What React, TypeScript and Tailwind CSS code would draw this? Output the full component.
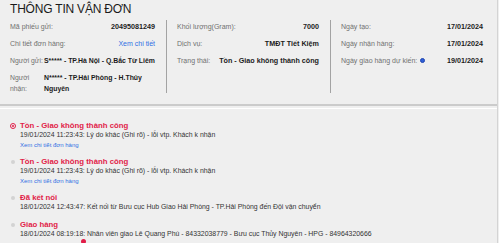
const font = "font-['Liberation_Sans','Helvetica',Arial,sans-serif]";

function Row({ label, value, kind = "bold" }: { label: string; value: string; kind?: "bold" | "link" }) {
    return (
        <div className="flex items-start justify-between leading-[11px]">
            <span className="text-[7px] text-[#6f6f6f]">{label}</span>
            <span className={kind === "link" ? "text-[7px] text-[#2f6fe4]" : "text-[7.2px] font-bold text-[#1c1c1c]"}>
                {value}
            </span>
        </div>
    );
}

function Party({ label, value, nowrap }: { label: string; value: string; nowrap?: boolean }) {
    return (
        <div className={`flex items-start gap-[2px] leading-[11px] ${nowrap ? "whitespace-nowrap" : ""}`}>
            <span className="w-[32px] shrink-0 text-[6.8px] text-[#6f6f6f]">{label}</span>
            <span className="text-[6.9px] font-bold text-[#1c1c1c]">{value}</span>
        </div>
    );
}

type Step = { title: string; detail: string; link?: boolean; active?: boolean };

const steps: Step[] = [
    {
        title: "Tồn - Giao không thành công",
        detail: "19/01/2024 11:23:43: Lý do khác (Ghi rõ) - lỗi vtp. Khách k nhận",
        link: true,
        active: true,
    },
    {
        title: "Tồn - Giao không thành công",
        detail: "19/01/2024 11:23:43: Lý do khác (Ghi rõ) - lỗi vtp. Khách k nhận",
        link: true,
    },
    {
        title: "Đã kết nối",
        detail: "18/01/2024 12:43:47: Kết nối từ Bưu cục Hub Giao Hải Phòng - TP.Hải Phòng đến Đội vận chuyển",
    },
    {
        title: "Giao hàng",
        detail: "18/01/2024 08:19:18: Nhân viên giao Lê Quang Phú - 84332038779 - Bưu cục Thủy Nguyên - HPG - 84964320666",
    },
];

export default function App() {
    return (
        <div className={`w-[499px] h-[243px] overflow-hidden bg-[#efefef] ${font}`}>
            <div className="w-[498px] h-full border-r border-[#d4d4d4]">
                {/* Title */}
                <div className="h-[20px] pl-[10px] pt-[2px] text-[12px] leading-[14px] font-medium tracking-[-0.2px] text-[#1a1a1a]">
                    THÔNG TIN VẬN ĐƠN
                </div>

                {/* Info card */}
                <div className="flex pb-[11px] border-b-2 border-[#cbcbcb]">
                    <div className="w-[166px] h-[73px] pl-[10px] pr-[11px] pt-px flex flex-col gap-[6px]">
                        <Row label="Mã phiếu gửi:" value="20495081249" />
                        <Row label="Chi tiết đơn hàng:" value="Xem chi tiết" kind="link" />
                        <Party label="Người gửi:" value="S***** - TP.Hà Nội - Q.Bắc Từ Liêm" nowrap />
                        <Party label="Người nhận:" value="N***** - TP.Hải Phòng - H.Thủy Nguyên" />
                    </div>
                    <div className="w-[164px] h-[73px] border-l border-[#a3a3a3] pl-[10px] pr-[11px] pt-px flex flex-col gap-[6px]">
                        <Row label="Khối lượng(Gram):" value="7000" />
                        <Row label="Dịch vụ:" value="TMĐT Tiết Kiệm" />
                        <Row label="Trạng thái:" value="Tồn - Giao không thành công" />
                    </div>
                    <div className="flex-1 h-[73px] border-l border-[#a3a3a3] pl-[10px] pr-[14px] pt-px flex flex-col gap-[6px]">
                        <Row label="Ngày tạo:" value="17/01/2024" />
                        <Row label="Ngày nhận hàng:" value="17/01/2024" />
                        <div className="flex items-start justify-between leading-[11px]">
                            <span className="flex items-center gap-[3px] text-[7px] text-[#6f6f6f]">
                                Ngày giao hàng dự kiến:
                                <span className="w-[5px] h-[5px] rounded-full bg-[#2f5fd8] border border-[#1f45b0]" />
                            </span>
                            <span className="text-[7.2px] font-bold text-[#1c1c1c]">19/01/2024</span>
                        </div>
                    </div>
                </div>

                {/* Timeline */}
                <div className="mt-[2px] border-t border-white pt-[12px] pl-[5px] flex flex-col gap-[7px]">
                    {steps.map((s, i) => (
                        <div key={i} className={`flex ${i === 3 ? "mt-[2px]" : ""}`}>
                            <div className="w-[15px] shrink-0 flex justify-center pt-[2px]">
                                {s.active ? (
                                    <span className="w-[6px] h-[6px] rounded-full border border-[#e11d48] flex items-center justify-center">
                                        <span className="w-[2px] h-[2px] rounded-full bg-[#e11d48]" />
                                    </span>
                                ) : (
                                    <span className="w-[4px] h-[4px] mt-px rounded-full bg-[#d3d3d3]" />
                                )}
                            </div>
                            <div className="flex flex-col">
                                <div className="text-[7.8px] leading-[9px] font-semibold text-[#e11d48]">{s.title}</div>
                                <div className="text-[6.9px] leading-[9px] text-[#333333]">{s.detail}</div>
                                {s.link && (
                                    <div className="mt-[2px] text-[6px] leading-[9px] text-[#2f6fe4]">Xem chi tiết đơn hàng</div>
                                )}
                            </div>
                        </div>
                    ))}
                    <div className="pl-[76px] -mt-[6px]">
                        <span className="block w-[5px] h-[5px] rounded-full bg-[#e11d48]" />
                    </div>
                </div>
            </div>
        </div>
    );
}
